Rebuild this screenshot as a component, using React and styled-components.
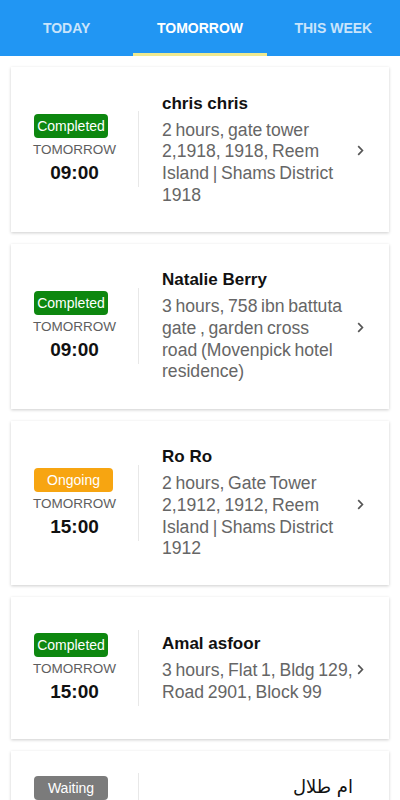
import React from "react";
import styled, { createGlobalStyle } from "styled-components";

const GlobalStyle = createGlobalStyle`
  body {
    margin: 0;
    background: #ffffff;
    font-family: "Liberation Sans", Arial, sans-serif;
  }
`;

// address lines kept as the app wraps them
const visits = [
  {
    status: "completed",
    time: "09:00",
    name: "chris chris",
    address: ["2 hours, gate tower", "2,1918, 1918, Reem", "Island | Shams District", "1918"],
  },
  {
    status: "completed",
    time: "09:00",
    name: "Natalie Berry",
    address: ["3 hours, 758 ibn battuta", "gate , garden cross", "road (Movenpick hotel", "residence)"],
  },
  {
    status: "ongoing",
    time: "15:00",
    name: "Ro Ro",
    address: ["2 hours, Gate Tower", "2,1912, 1912, Reem", "Island | Shams District", "1912"],
  },
  {
    status: "completed",
    time: "15:00",
    name: "Amal asfoor",
    address: ["3 hours, Flat 1, Bldg 129,", "Road 2901, Block 99"],
  },
  {
    status: "waiting",
    time: "16:00",
    name: "ام طلال",
    address: ["2 hours, Reem Island"],
    rtl: true,
  },
];

const statusLabels = {
  completed: "Completed",
  ongoing: "Ongoing",
  waiting: "Waiting",
};

export default function App() {
  return (
    <>
      <GlobalStyle />
      <Page>
        <TabBar>
          <Tab>TODAY</Tab>
          <Tab $active>TOMORROW</Tab>
          <Tab>THIS WEEK</Tab>
        </TabBar>
        <List>
          {visits.map((v, i) => (
            <Card key={i} $compact={v.rtl}>
              <WhenColumn>
                <Badge $status={v.status}>{statusLabels[v.status]}</Badge>
                <DayLabel>TOMORROW</DayLabel>
                <TimeLabel>{v.time}</TimeLabel>
              </WhenColumn>
              <Details $compact={v.rtl}>
                <Name $rtl={v.rtl}>{v.name}</Name>
                {v.address.map((line, j) => (
                  <AddressLine key={j}>{line}</AddressLine>
                ))}
              </Details>
              <Chevron>
                <svg width="7" height="11" viewBox="0 0 7 11">
                  <path d="M1.2 1.2 L5.4 5.5 L1.2 9.8" fill="none" stroke="#555" strokeWidth="1.7" />
                </svg>
              </Chevron>
            </Card>
          ))}
        </List>
      </Page>
    </>
  );
}

const Page = styled.div`
  width: 400px;
  height: 800px;
  overflow: hidden;
  background: #ffffff;
`;

const TabBar = styled.div`
  display: grid;
  grid-template-columns: repeat(3, 1fr);
  height: 56px;
  background: #2196f3;
`;

const Tab = styled.div`
  display: flex;
  align-items: center;
  justify-content: center;
  font-size: 14px;
  font-weight: bold;
  color: ${(p) => (p.$active ? "#ffffff" : "#c9e4fb")};
  border-bottom: 3px solid ${(p) => (p.$active ? "#efe98f" : "transparent")};
  padding-top: 3px;
`;

const List = styled.div`
  display: flex;
  flex-direction: column;
  gap: 12px;
  padding: 11px 11px 0;
`;

const Card = styled.div`
  display: flex;
  align-items: ${(p) => (p.$compact ? "flex-start" : "center")};
  padding: ${(p) => (p.$compact ? "14px" : "25.5px")} 24px 25.5px 0;
  background: #ffffff;
  box-shadow: 0 1px 3px rgba(0, 0, 0, 0.2);
`;

const WhenColumn = styled.div`
  display: flex;
  flex-direction: column;
  align-items: center;
  justify-content: center;
  width: 127px;
  flex-shrink: 0;
  height: 76px;
  margin: 7.5px 0;
  border-right: 1px solid #e8e8e8;
`;

const badgeColors = {
  completed: "#0d870f",
  ongoing: "#f7a511",
  waiting: "#7b7b7b",
};

const Badge = styled.div`
  width: ${(p) => (p.$status === "ongoing" ? "79px" : "74px")};
  height: 24px;
  margin-left: ${(p) => (p.$status === "ongoing" ? "-2px" : "-7px")};
  line-height: 24px;
  text-align: center;
  border-radius: 4px;
  background: ${(p) => badgeColors[p.$status]};
  color: #ffffff;
  font-size: 14px;
`;

const DayLabel = styled.div`
  margin-top: 3px;
  font-size: 13.5px;
  color: #5e5e5e;
  line-height: 17px;
`;

const TimeLabel = styled.div`
  margin-top: 4px;
  font-size: 19px;
  font-weight: bold;
  color: #111111;
  line-height: 22px;
`;

const Details = styled.div`
  flex: 1;
  min-width: 0;
  padding: ${(p) => (p.$compact ? "11px" : "0")} 4px 0 23px;
`;

const Name = styled.div`
  font-family: ${(p) => (p.$rtl ? '"DejaVu Sans", sans-serif' : "inherit")};
  font-size: ${(p) => (p.$rtl ? "18px" : "17px")};
  font-weight: ${(p) => (p.$rtl ? "normal" : "bold")};
  color: #111111;
  line-height: 22px;
  margin-bottom: 5px;
  text-align: ${(p) => (p.$rtl ? "right" : "left")};
  direction: ${(p) => (p.$rtl ? "rtl" : "ltr")};
`;

const AddressLine = styled.div`
  font-size: 17.6px;
  word-spacing: -1.2px;
  color: #666666;
  line-height: 21.7px;
  white-space: nowrap;
`;

const Chevron = styled.div`
  display: flex;
  align-items: center;
  align-self: center;
  width: 8px;
  flex-shrink: 0;
  padding-top: 2px;
`;
